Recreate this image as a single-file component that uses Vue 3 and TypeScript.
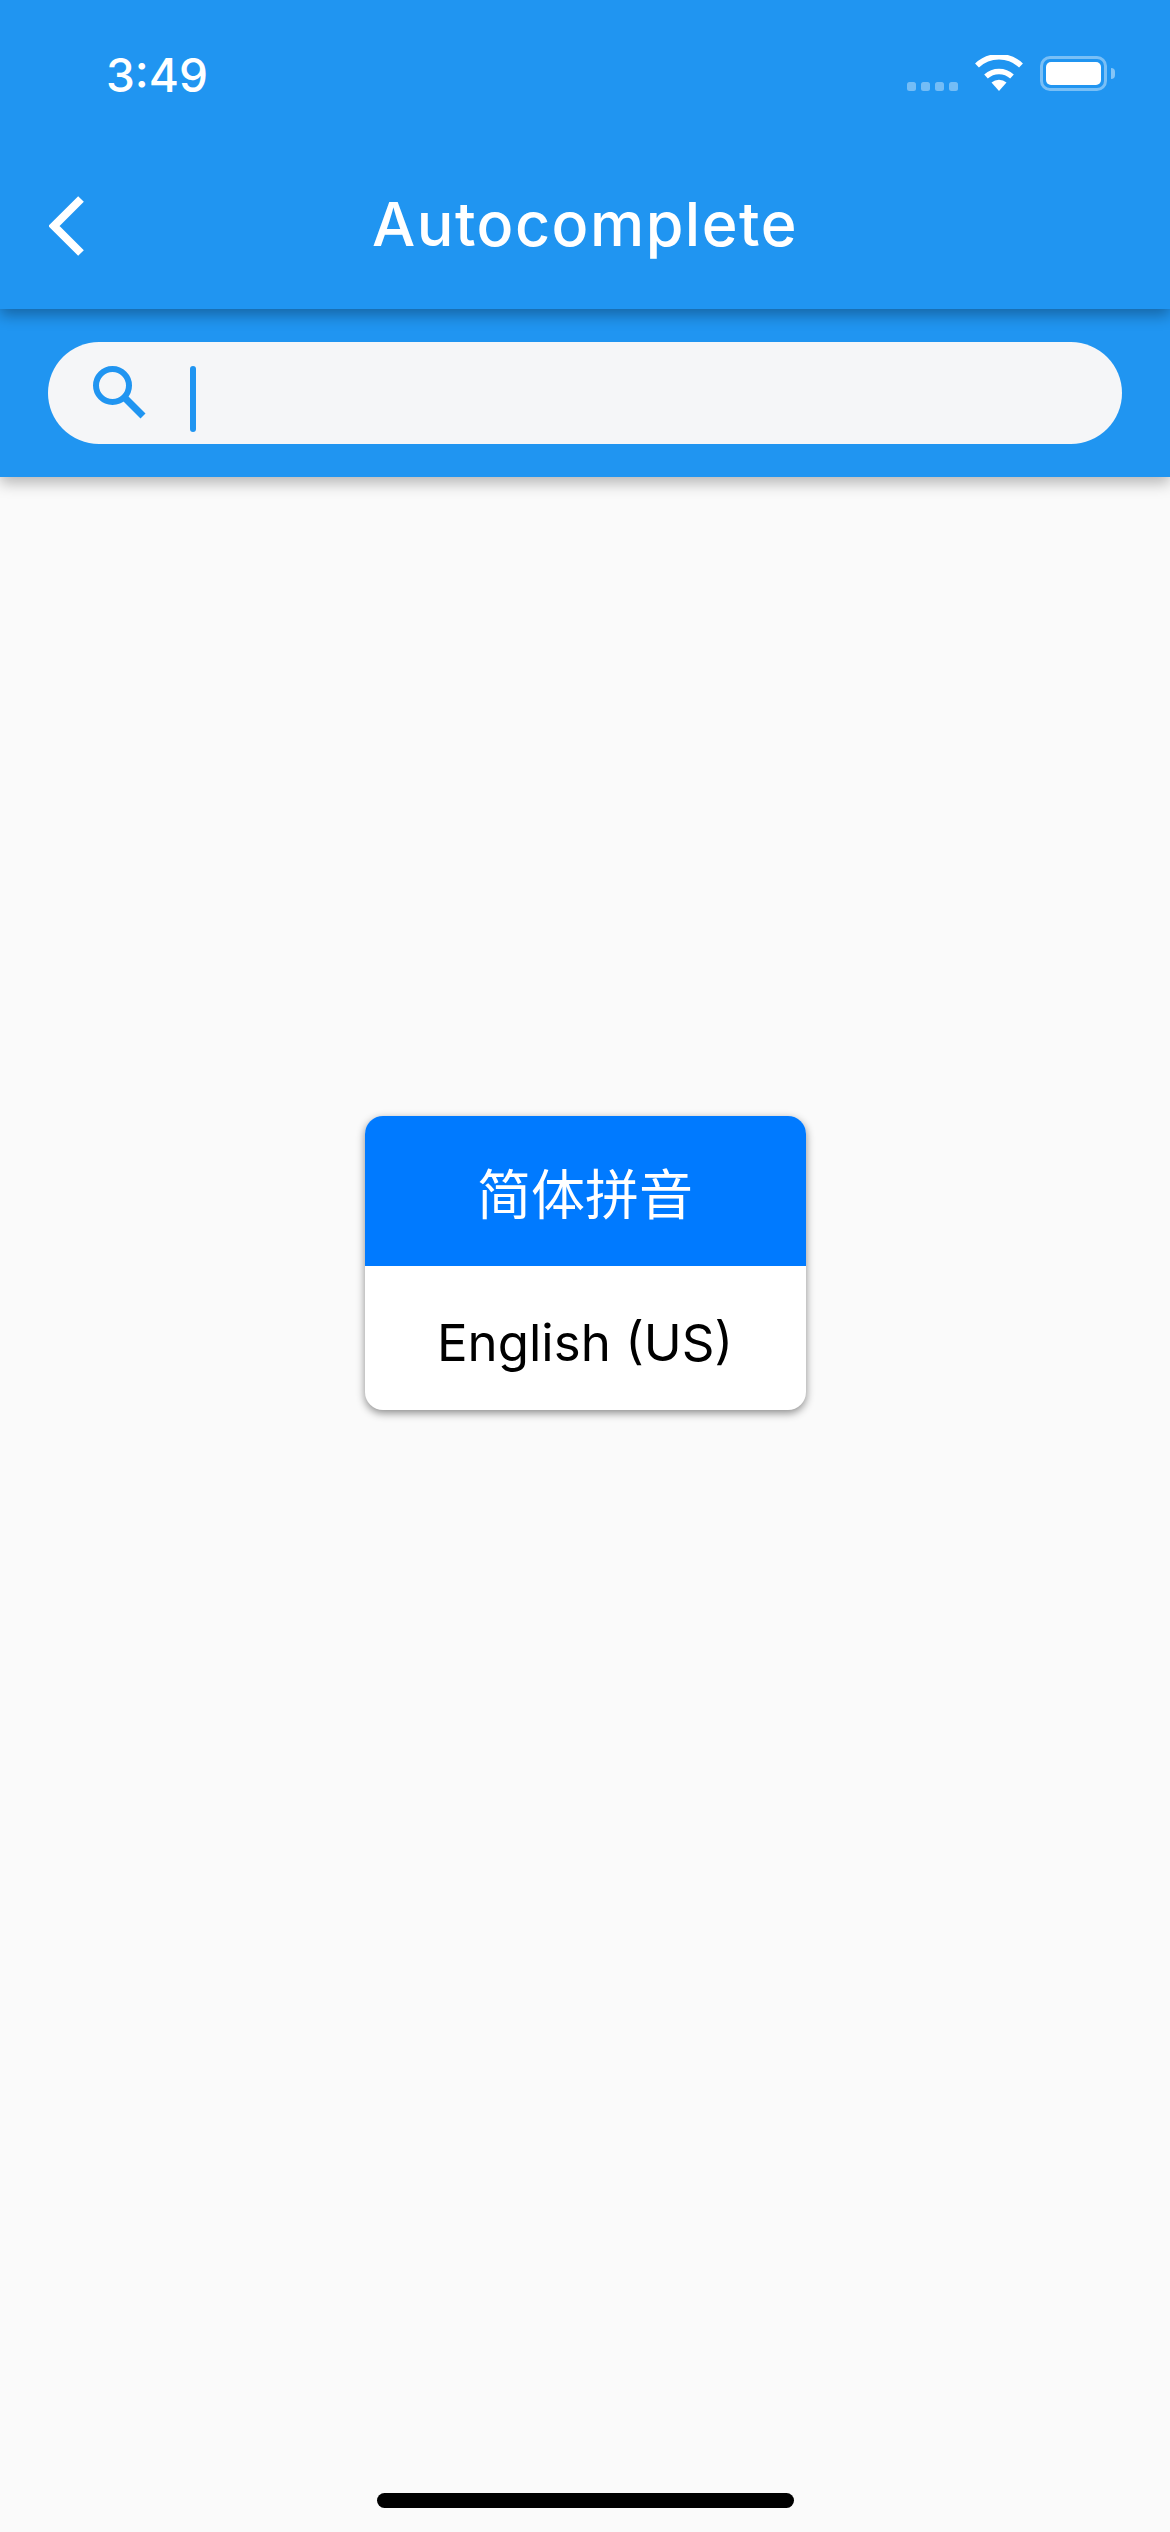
<script setup lang="ts">
const dots: number[] = [0, 1, 2, 3]
</script>

<template>
  <div class="screen">
    <header class="appbar">
      <div class="status">
        <span class="time">3:49</span>
        <div class="status-icons">
          <div class="signal">
            <i v-for="d in dots" :key="d" class="dot"></i>
          </div>
          <svg class="wifi" width="48" height="36" viewBox="0 0 48 36">
            <path d="M24 36 L16.5 27.5 A11.5 11.5 0 0 1 31.5 27.5 Z" fill="#fff" />
            <path d="M11 21.5 A19.5 19.5 0 0 1 37 21.5" fill="none" stroke="#fff" stroke-width="5.4" />
            <path d="M2 10.5 A32 32 0 0 1 46 10.5" fill="none" stroke="#fff" stroke-width="5.6" />
          </svg>
          <div class="battery">
            <div class="battery-body"><div class="battery-fill"></div></div>
            <div class="battery-nub"></div>
          </div>
        </div>
      </div>
      <div class="navbar">
        <svg class="back" width="36" height="60" viewBox="0 0 36 60">
          <path d="M32 3 L5 30 L32 57" fill="none" stroke="#fff" stroke-width="8" />
        </svg>
        <h1 class="title">Autocomplete</h1>
      </div>
    </header>
    <div class="searchwrap">
      <div class="searchbar">
        <svg class="search-icon" width="54" height="54" viewBox="0 0 54 54">
          <circle cx="19.5" cy="19.5" r="16.5" fill="none" stroke="#2095f1" stroke-width="6" />
          <path d="M32 32 L50 50" fill="none" stroke="#2095f1" stroke-width="7" />
        </svg>
        <div class="caret"></div>
      </div>
    </div>
    <main class="content">
      <div class="picker">
        <div class="option selected">简体拼音</div>
        <div class="option plain">English (US)</div>
      </div>
    </main>
    <div class="home"></div>
  </div>
</template>

<style>
html, body { margin: 0; padding: 0; background: #fafafa; }
</style>

<style scoped>
.screen {
  width: 1170px;
  height: 2532px;
  background: #fafafa;
  display: flex;
  flex-direction: column;
  overflow: hidden;
  position: relative;
  font-family: Inter, "Noto Sans CJK SC", sans-serif;
}
.appbar {
  height: 309px;
  background: #2095f1;
  flex: none;
  position: relative;
  z-index: 2;
  box-shadow: 0 6px 14px rgba(0, 0, 0, 0.32);
}
.status {
  height: 130px;
  display: flex;
  justify-content: space-between;
  align-items: flex-start;
  padding: 0 55px 0 106px;
  color: #fff;
}
.time {
  font-size: 46px;
  line-height: 46px;
  margin-top: 52px;
  font-weight: 500;
}
.status-icons {
  display: flex;
  align-items: flex-start;
  margin-top: 55px;
}
.signal {
  display: flex;
  gap: 5px;
  margin-top: 27px;
  margin-right: 17px;
}
.dot {
  width: 9px;
  height: 9px;
  border-radius: 2.5px;
  background: rgba(255, 255, 255, 0.38);
}
.wifi { margin-right: 17px; display: block; }
.battery { display: flex; align-items: center; margin-top: 1px; }
.battery-body {
  width: 67px;
  height: 35px;
  box-sizing: border-box;
  border: 3px solid rgba(255, 255, 255, 0.4);
  border-radius: 10px;
  padding: 3px;
}
.battery-fill {
  height: 100%;
  background: #fff;
  border-radius: 5px;
}
.battery-nub {
  width: 4px;
  height: 11px;
  margin-left: 4px;
  background: rgba(255, 255, 255, 0.45);
  border-radius: 0 4px 4px 0;
}
.navbar {
  height: 179px;
  position: relative;
  display: flex;
  justify-content: center;
}
.back {
  position: absolute;
  left: 49px;
  top: 66px;
}
.title {
  margin: 0;
  color: #fff;
  font-size: 61px;
  font-weight: 500;
  line-height: 62px;
  margin-top: 63px;
  letter-spacing: 1.5px;
}
.searchwrap {
  height: 168px;
  flex: none;
  background: #2095f1;
  box-sizing: border-box;
  padding: 33px 48px 0;
  position: relative;
  z-index: 1;
  box-shadow: 0 6px 14px rgba(0, 0, 0, 0.28);
}
.searchbar {
  height: 102px;
  background: #f5f6f8;
  border-radius: 51px;
  display: flex;
  align-items: flex-start;
  padding-left: 45px;
}
.search-icon {
  display: block;
  margin-top: 24px;
}
.caret {
  width: 6px;
  height: 66px;
  margin-left: 43px;
  margin-top: 24px;
  border-radius: 3px;
  background: #2095f1;
}
.content {
  flex: 1;
  display: flex;
  justify-content: center;
  align-items: flex-start;
  padding-top: 639px;
}
.picker {
  width: 441px;
  border-radius: 18px;
  overflow: hidden;
  background: #fff;
  box-shadow: 0 3px 8px rgba(0, 0, 0, 0.45);
}
.option {
  display: flex;
  align-items: center;
  justify-content: center;
  height: 144px;
  font-size: 51px;
  color: #000;
}
.option.plain {
  box-sizing: border-box;
  padding-top: 8px;
}
.option.selected {
  height: 150px;
  background: #007aff;
  color: #fff;
  font-weight: 400;
  font-size: 54px;
}
.home {
  position: absolute;
  left: 377px;
  top: 2493px;
  width: 417px;
  height: 15px;
  border-radius: 8px;
  background: #000;
}
</style>
